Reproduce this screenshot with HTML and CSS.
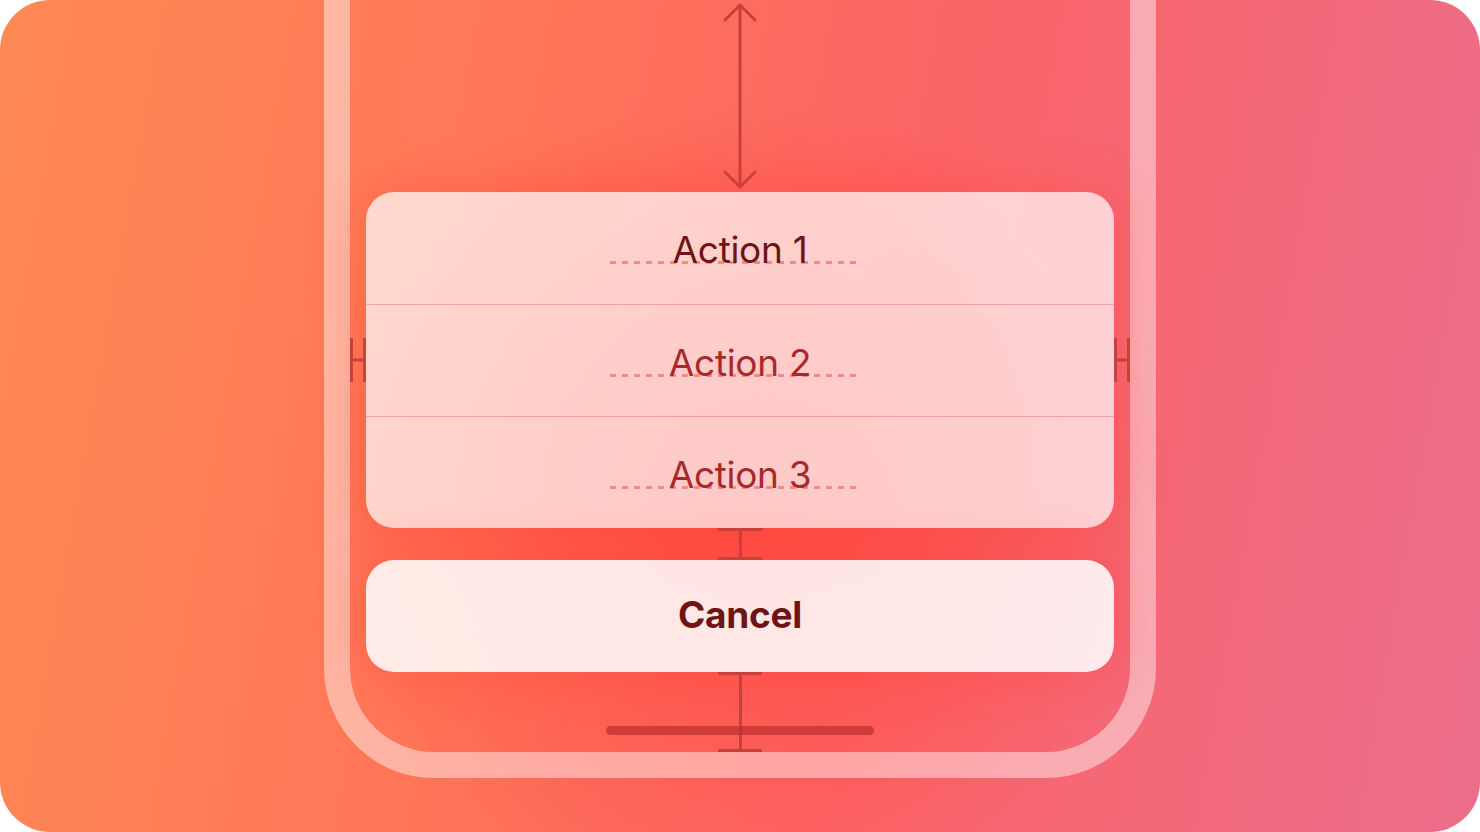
FILE: index.html
```html
<!DOCTYPE html>
<html lang="en">
<head>
<meta charset="UTF-8">
<meta name="viewport" content="width=device-width, initial-scale=1.0">
<title>Action Sheet</title>
<link rel="stylesheet" href="styles.css">
</head>
<body>

<div class="canvas">
  <div class="frame">

    <div class="top-space">
      <svg width="40" height="192" viewBox="0 0 40 192">
        <path d="M20 5 V187 M5 20 L20 5 L35 20 M5 172 L20 187 L35 172" fill="none" stroke="#c8403c" stroke-width="3" stroke-linecap="round" stroke-linejoin="round"/>
      </svg>
    </div>

    <div class="sheet-row">
      <svg class="h-mark" width="16" height="46" viewBox="0 0 16 46">
        <path d="M1.5 1 V45 M14.5 1 V45 M1.5 23 H14.5" fill="none" stroke="#c8403c" stroke-width="3"/>
      </svg>
      <div class="sheet">
        <div class="action dark"><span class="dots"></span><span class="label">Action 1</span></div>
        <div class="action"><span class="dots"></span><span class="label">Action 2</span></div>
        <div class="action"><span class="dots"></span><span class="label">Action 3</span></div>
      </div>
      <svg class="h-mark" width="16" height="46" viewBox="0 0 16 46">
        <path d="M1.5 1 V45 M14.5 1 V45 M1.5 23 H14.5" fill="none" stroke="#c8403c" stroke-width="3"/>
      </svg>
    </div>

    <div class="gap">
      <div class="beam"></div>
    </div>

    <div class="cancel">Cancel</div>

    <div class="bottom-space">
      <div class="beam tall"></div>
      <div class="home"></div>
    </div>

  </div>
</div>

</body>
</html>
```

FILE: styles.css
```css
body{
    margin:0;
    background:#fff;
    font-family:Inter,"Noto Sans",sans-serif;
}

.canvas{
    width:1480px;
    height:832px;
    border-radius:50px;
    overflow:hidden;
    display:flex;
    justify-content:center;
    background:
        radial-gradient(ellipse 440px 400px at 50% 60%, rgba(255,70,60,0.85), rgba(255,70,60,0) 100%),
        linear-gradient(100deg, #ff8a55 0%, #ff7458 35%, #fb6467 60%, #ec6e8c 100%);
}

.frame{
    width:832px;
    height:778px;
    box-sizing:border-box;
    border:26px solid rgba(255,255,255,0.45);
    border-top:0;
    border-radius:0 0 110px 110px;
    display:flex;
    flex-direction:column;
}

.top-space{
    height:192px;
    display:flex;
    justify-content:center;
}

.sheet-row{
    display:flex;
    align-items:center;
}

.h-mark{
    flex:none;
    display:block;
}

.sheet{
    flex:1;
    background:rgba(255,255,255,0.7);
    border-radius:28px;
    overflow:hidden;
    box-shadow:0 0 50px rgba(255,60,50,0.35);
}

.action{
    height:112px;
    position:relative;
    display:flex;
    align-items:center;
    justify-content:center;
    padding-top:3px;
    font-size:37px;
    color:#a8292a;
    border-top:1px solid rgba(240,140,140,0.7);
    box-sizing:border-box;
}

.action:first-child{
    border-top:0;
}

.action.dark{
    color:#6e1414;
}

.label{
    position:relative;
    letter-spacing:-0.3px;
}

.dots{
    position:absolute;
    left:244px;
    width:252px;
    top:69px;
    height:3px;
    background:repeating-linear-gradient(90deg, rgba(240,120,120,0.8) 0 6px, transparent 6px 12px);
}

.gap{
    height:32px;
    display:flex;
    justify-content:center;
}

.beam{
    width:44px;
    height:100%;
    box-sizing:border-box;
    border-top:3px solid #c8403c;
    border-bottom:3px solid #c8403c;
    background:linear-gradient(#c8403c,#c8403c) center/3px 100% no-repeat;
}

.cancel{
    margin:0 16px;
    height:112px;
    border-radius:28px;
    background:rgba(255,255,255,0.86);
    box-shadow:0 0 50px rgba(255,60,50,0.3);
    display:flex;
    align-items:center;
    justify-content:center;
    padding-bottom:4px;
    box-sizing:border-box;
    font-size:37px;
    font-weight:700;
    color:#6e1414;
    letter-spacing:-0.3px;
}

.bottom-space{
    height:80px;
    position:relative;
    display:flex;
    justify-content:center;
}

.home{
    position:absolute;
    left:256px;
    width:268px;
    top:54px;
    height:9px;
    border-radius:5px;
    background:rgba(190,50,50,0.75);
}
```
